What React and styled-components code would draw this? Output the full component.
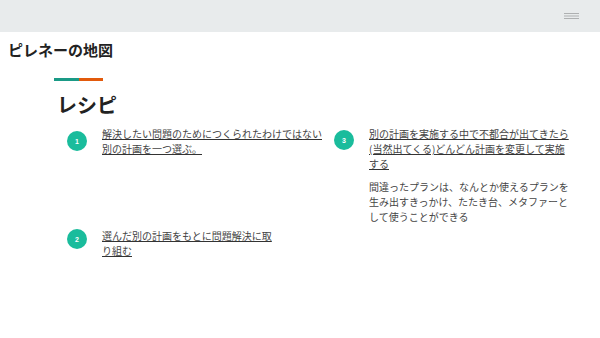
import React from "react";
import styled, { createGlobalStyle } from "styled-components";

const Global = createGlobalStyle`
  html, body { margin: 0; padding: 0; background: #fff; }
  body { font-family: "Noto Sans CJK JP", "Noto Sans", sans-serif; color: #333; }
`;

const Page = styled.div`
  width: 600px;
  height: 338px;
  overflow: hidden;
  background: #fff;
`;

const Header = styled.header`
  height: 32px;
  background: #e8ebec;
  display: flex;
  align-items: center;
  justify-content: flex-end;
  padding-right: 21px;
`;

const MenuButton = styled.div`
  width: 15px;
  height: 7px;
  display: flex;
  margin-top: 1px;
`;

const SiteTitle = styled.h1`
  margin: 10px 0 0 8px;
  font-size: 15px;
  line-height: 15px;
  font-weight: 700;
  color: #222;
`;

const Section = styled.section`
  padding-left: 54px;
`;

const AccentBar = styled.div`
  margin-top: 21px;
  width: 49px;
  height: 3px;
  display: flex;
`;

const BarPart = styled.span`
  flex: 1;
  background: ${(p) => p.$color};
`;

const Heading = styled.h2`
  margin: 14px 0 0 3px;
  font-size: 20px;
  line-height: 20px;
  font-weight: 700;
  color: #222;
`;

const Columns = styled.div`
  display: flex;
  margin-top: 11px;
  padding-left: 13px;
`;

const Column = styled.div`
  display: flex;
  flex-direction: column;
  gap: ${(p) => p.$gap || 0}px;
  width: ${(p) => (p.$width ? `${p.$width}px` : "auto")};
`;

const Step = styled.div`
  display: flex;
  align-items: flex-start;
  gap: 15px;
`;

const Badge = styled.div`
  flex: none;
  width: 20px;
  height: 20px;
  border-radius: 50%;
  background: #1abc9c;
  color: #fff;
  font-family: "Liberation Sans", Arial, sans-serif;
  font-size: 7px;
  font-weight: 700;
  display: flex;
  align-items: center;
  justify-content: center;
  margin-top: ${(p) => p.$dy}px;
`;

const Body = styled.div`
  width: ${(p) => p.$width}px;
  font-size: 10px;
  line-height: 15px;
`;

const StepLink = styled.a`
  color: #444;
  text-decoration: underline;
  text-decoration-color: #333;
  text-underline-offset: 1px;
`;

const Note = styled.p`
  margin: 8px 0 0;
  color: #444;
`;

const Menu = () => (
  <svg width="15" height="7" viewBox="0 0 15 7">
    <g stroke="#aeb0b1" strokeWidth="1">
      <line x1="0" y1="0.5" x2="15" y2="0.5" />
      <line x1="0" y1="3" x2="15" y2="3" />
      <line x1="0" y1="5.5" x2="15" y2="5.5" />
    </g>
  </svg>
);

export default function App() {
  return (
    <Page>
      <Global />
      <Header>
        <MenuButton>
          <Menu />
        </MenuButton>
      </Header>
      <SiteTitle>ピレネーの地図</SiteTitle>
      <Section>
        <AccentBar>
          <BarPart $color="#1a9a86" />
          <BarPart $color="#e25a0c" />
        </AccentBar>
        <Heading>レシピ</Heading>
        <Columns>
          <Column $width={267} $gap={72}>
            <Step>
              <Badge $dy={5}>1</Badge>
              <Body $width={224}>
                <StepLink>解決したい問題のためにつくられたわけではない別の計画を一つ選ぶ。</StepLink>
              </Body>
            </Step>
            <Step>
              <Badge $dy={1}>2</Badge>
              <Body $width={175}>
                <StepLink>選んだ別の計画をもとに問題解決に取り組む</StepLink>
              </Body>
            </Step>
          </Column>
          <Column>
            <Step>
              <Badge $dy={4}>3</Badge>
              <Body $width={205}>
                <StepLink>別の計画を実施する中で不都合が出てきたら(当然出てくる)どんどん計画を変更して実施する</StepLink>
                <Note>間違ったプランは、なんとか使えるプランを生み出すきっかけ、たたき台、メタファーとして使うことができる</Note>
              </Body>
            </Step>
          </Column>
        </Columns>
      </Section>
    </Page>
  );
}
